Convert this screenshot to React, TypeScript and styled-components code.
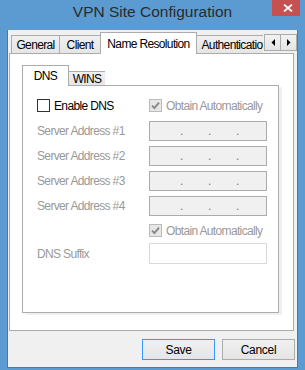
import React from 'react'
import styled, { createGlobalStyle } from 'styled-components'

const GlobalStyle = createGlobalStyle`
  html, body { margin: 0; padding: 0; }
  body {
    background: #5b9bd1;
    font-family: 'Liberation Sans', Arial, sans-serif;
  }
  * { box-sizing: border-box; }
`

const Window = styled.div`
  width: 305px;
  height: 370px;
  background: #5b9bd1;
  display: flex;
  flex-direction: column;
`

const TitleBar = styled.div`
  height: 30px;
  flex-shrink: 0;
  position: relative;
  display: flex;
  justify-content: center;
`

const Title = styled.div`
  margin-top: 4px;
  font-size: 15.5px;
  line-height: 16px;
  color: #2b2b2b;
`

const CloseButton = styled.div`
  position: absolute;
  top: 0;
  right: 5px;
  width: 28px;
  height: 16px;
  background: #c75050;
  display: flex;
  align-items: center;
  justify-content: center;
  padding-left: 3px;
`

const Client = styled.div`
  flex: 1;
  margin: 0 7px 2px 7px;
  border: 1px solid #3f7db3;
  border-top: none;
  background: #f0f0f0;
  padding: 2px 0 0 1px;
  display: flex;
  flex-direction: column;
`

const TabStrip = styled.div<{ $h: number }>`
  height: ${p => p.$h}px;
  display: flex;
  position: relative;
  z-index: 1;
`

const TabList = styled.div<{ $w?: number }>`
  display: flex;
  align-items: flex-end;
  flex-shrink: 0;
  overflow: hidden;
  ${p => (p.$w ? `width: ${p.$w}px;` : '')}
`

const Tab = styled.div<{ $w: number; $h: number; $active?: boolean }>`
  width: ${p => p.$w}px;
  height: ${p => p.$h}px;
  flex-shrink: 0;
  margin-right: -1px;
  border: 1px solid #acacac;
  border-bottom: ${p => (p.$active ? 'none' : '1px solid #acacac')};
  background: ${p => (p.$active ? '#ffffff' : 'linear-gradient(#f0f0f0, #e5e5e5)')};
  position: relative;
  z-index: ${p => (p.$active ? 2 : 1)};
  display: flex;
  align-items: center;
  justify-content: center;
  font-size: 12px;
  letter-spacing: -0.65px;
  color: #000;
  white-space: nowrap;
`

const ScrollArrows = styled.div`
  display: flex;
  flex-shrink: 0;
  margin-top: 2px;
  margin-left: 1px;
`

const ArrowButton = styled.div`
  width: 17px;
  height: 17px;
  margin-right: -1px;
  border: 1px solid #acacac;
  background: linear-gradient(#f2f2f2, #e5e5e5);
  display: flex;
  align-items: center;
  justify-content: center;
`

const OuterPanel = styled.div`
  width: 285px;
  height: 278px;
  margin-top: -1px;
  border: 1px solid #acacac;
  background: #ffffff;
  padding: 11px 0 0 12px;
`

const InnerPanel = styled.div`
  width: 257px;
  height: 228px;
  margin-top: -1px;
  border: 1px solid #acacac;
  background: #ffffff;
  box-shadow: 3px 2px 0 #f0f0f0;
  padding: 7px 0 0 14px;
`

const Form = styled.div`
  display: grid;
  grid-template-columns: 112px 118px;
  grid-template-rows: repeat(6, 25px) 21px;
  align-items: center;
`

const Label = styled.div<{ $col?: number }>`
  grid-column: ${p => p.$col ?? 1};
  font-size: 12px;
  letter-spacing: -0.65px;
  color: #999999;
  white-space: nowrap;
`

const CheckRow = styled.label<{ $col: number; $disabled?: boolean }>`
  grid-column: ${p => p.$col};
  display: flex;
  align-items: center;
  gap: 4px;
  font-size: 12px;
  letter-spacing: -0.65px;
  color: ${p => (p.$disabled ? '#999999' : '#000000')};
  white-space: nowrap;
`

const Box = styled.span<{ $disabled?: boolean }>`
  width: 13px;
  height: 13px;
  flex-shrink: 0;
  border: 1px solid ${p => (p.$disabled ? '#bcbcbc' : '#333333')};
  background: ${p => (p.$disabled ? '#e6e6e6' : '#ffffff')};
  display: flex;
  align-items: center;
  justify-content: center;
`

const IpBox = styled.div`
  grid-column: 2;
  height: 20px;
  border: 1px solid #acacac;
  background: #f0f0f0;
  display: flex;
  align-items: center;
  gap: 26px;
  padding-left: 30px;
`

const Dot = styled.span`
  width: 2px;
  overflow: visible;
  font-size: 12px;
  color: #7a7a7a;
`

const TextBox = styled.div`
  grid-column: 2;
  height: 21px;
  border: 1px solid #d9d9d9;
  background: #ffffff;
`

const ButtonRow = styled.div`
  margin-top: 8px;
  margin-right: 2px;
  display: flex;
  justify-content: flex-end;
  gap: 7px;
`

const Button = styled.div<{ $default?: boolean }>`
  width: 73px;
  height: 21px;
  border: 1px solid ${p => (p.$default ? '#3399ff' : '#acacac')};
  background: linear-gradient(#f0f0f0, #e5e5e5);
  display: flex;
  align-items: center;
  justify-content: center;
  font-size: 12px;
  letter-spacing: -0.3px;
  color: #000;
`

const Check = () => (
  <svg width="9" height="9" viewBox="0 0 9 9">
    <path d="M1 4.6 L3.4 7 L8 1.6" fill="none" stroke="#888888" strokeWidth="1.9" />
  </svg>
)

const Checkbox = ({ col, label, checked, disabled }: { col: number; label: string; checked?: boolean; disabled?: boolean }) => (
  <CheckRow $col={col} $disabled={disabled}>
    <Box $disabled={disabled}>{checked && <Check />}</Box>
    {label}
  </CheckRow>
)

const IpField = () => (
  <IpBox>
    <Dot>.</Dot>
    <Dot>.</Dot>
    <Dot>.</Dot>
  </IpBox>
)

const outerTabs = [
  { name: 'General', w: 49 },
  { name: 'Client', w: 42 },
  { name: 'Name Resolution', w: 97, active: true },
  { name: 'Authentication', w: 78 },
]

const App = () => {
  return (
    <>
      <GlobalStyle />
      <Window>
        <TitleBar>
          <Title>VPN Site Configuration</Title>
          <CloseButton>
            <svg width="10" height="8" viewBox="0 0 10 8">
              <path d="M1 0.5 L9 7.5 M9 0.5 L1 7.5" stroke="#ffffff" strokeWidth="1.8" />
            </svg>
          </CloseButton>
        </TitleBar>
        <Client>
          <TabStrip $h={22} style={{ paddingLeft: 2 }}>
            <TabList $w={252}>
              {outerTabs.map(t => (
                <Tab key={t.name} $w={t.w} $h={t.active ? 22 : 19} $active={t.active}>
                  {t.name}
                </Tab>
              ))}
            </TabList>
            <ScrollArrows>
              <ArrowButton>
                <svg width="4" height="7" viewBox="0 0 4 7">
                  <polygon points="4,0 4,7 0.5,3.5" fill="#000" />
                </svg>
              </ArrowButton>
              <ArrowButton>
                <svg width="4" height="7" viewBox="0 0 4 7">
                  <polygon points="0,0 0,7 3.5,3.5" fill="#000" />
                </svg>
              </ArrowButton>
            </ScrollArrows>
          </TabStrip>
          <OuterPanel>
            <TabStrip $h={21}>
              <TabList>
                <Tab $w={47} $h={21} $active>DNS</Tab>
                <Tab $w={38} $h={15}>WINS</Tab>
              </TabList>
            </TabStrip>
            <InnerPanel>
              <Form>
                <Checkbox col={1} label="Enable DNS" />
                <Checkbox col={2} label="Obtain Automatically" checked disabled />
                {[1, 2, 3, 4].map(n => (
                  <React.Fragment key={n}>
                    <Label>Server Address #{n}</Label>
                    <IpField />
                  </React.Fragment>
                ))}
                <Checkbox col={2} label="Obtain Automatically" checked disabled />
                <Label>DNS Suffix</Label>
                <TextBox />
              </Form>
            </InnerPanel>
          </OuterPanel>
          <ButtonRow>
            <Button $default>Save</Button>
            <Button>Cancel</Button>
          </ButtonRow>
        </Client>
      </Window>
    </>
  )
}

export default App
